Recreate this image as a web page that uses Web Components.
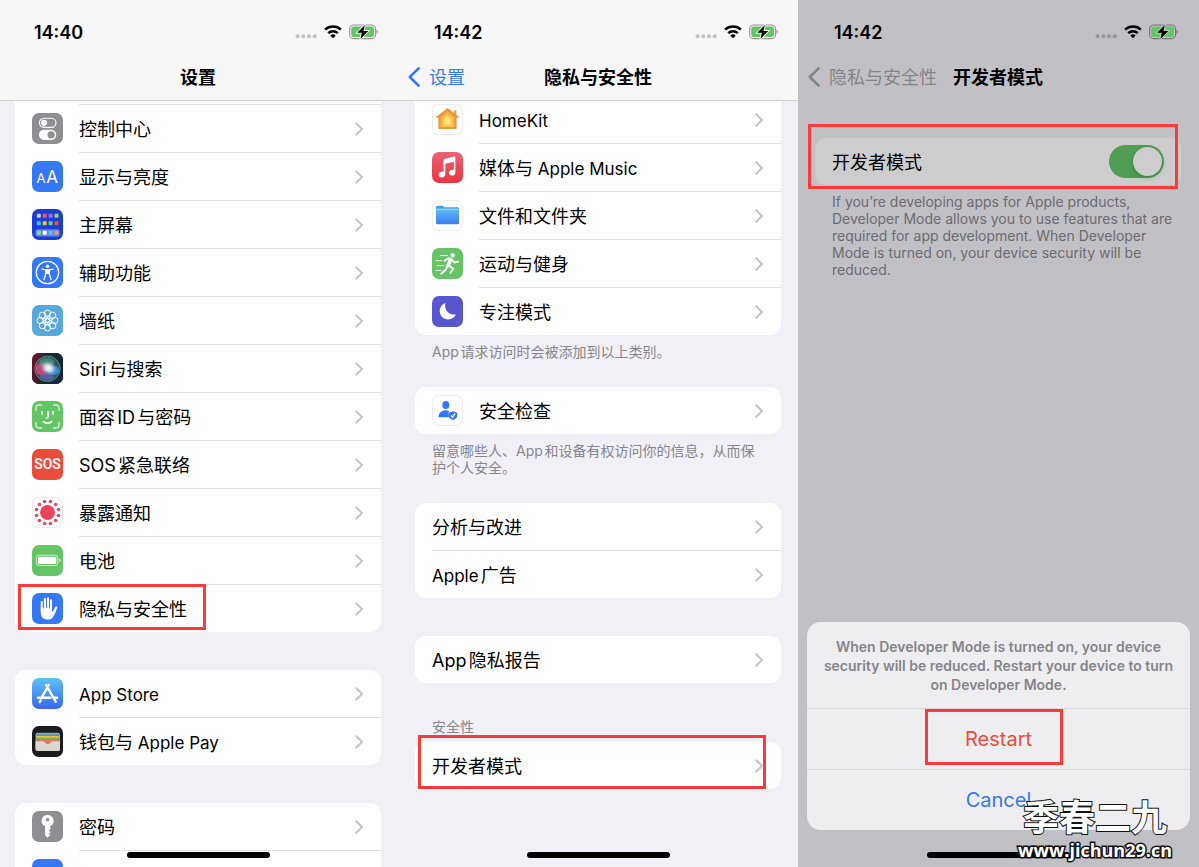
<!DOCTYPE html>
<html lang="zh-CN">
<head>
<meta charset="UTF-8">
<meta name="viewport" content="width=device-width, initial-scale=1">
<title>设置</title>
<style>
    body {
        margin: 0;
        font-family: Inter, "Noto Sans CJK SC", sans-serif;
        font-size: 17px;
        color: #000;
        overflow: hidden;
        text-autospace: normal;
    }
    .screens {
        display: grid;
        grid-template-columns: 400fr 398fr 401fr;
        height: 100vh;
        position: relative;
    }
    [lang="en"] { font-size: 17px; }
    #settings { --start: 15px; --end: 19px; }
    #privacy { --start: 15px; --end: 17px; }
    #developer { --start: 17px; --end: 18px; }
    #settings settings-group:first-of-type { --cap: 3px; --first-rule: 1px; --radius-top: 0px; }
    #privacy settings-group:first-of-type { margin-top: -5px; --radius-top: 0px; }
    #developer settings-group { margin-top: 37px; }
</style>
</head>
<body>
<main class="screens">
    <phone-screen id="settings" time="14:40" heading="设置">
        <settings-group>
            <settings-row icon="control">控制中心</settings-row>
            <settings-row icon="display">显示与亮度</settings-row>
            <settings-row icon="home">主屏幕</settings-row>
            <settings-row icon="access">辅助功能</settings-row>
            <settings-row icon="wallpaper">墙纸</settings-row>
            <settings-row icon="siri">Siri与搜索</settings-row>
            <settings-row icon="face">面容ID与密码</settings-row>
            <settings-row icon="sos">SOS紧急联络</settings-row>
            <settings-row icon="exposure">暴露通知</settings-row>
            <settings-row icon="battery">电池</settings-row>
            <settings-row icon="hand" marked style="--mark: 0 175px 2px 3px">隐私与安全性</settings-row>
        </settings-group>
        <settings-group>
            <settings-row icon="store"><span lang="en">App Store</span></settings-row>
            <settings-row icon="wallet">钱包与<span lang="en"> Apple Pay</span></settings-row>
        </settings-group>
        <settings-group>
            <settings-row icon="key">密码</settings-row>
            <settings-row icon="blank"></settings-row>
        </settings-group>
    </phone-screen>

    <phone-screen id="privacy" time="14:42" heading="隐私与安全性" back="设置">
        <settings-group note="App请求访问时会被添加到以上类别。">
            <settings-row icon="homekit"><span lang="en">HomeKit</span></settings-row>
            <settings-row icon="music">媒体与<span lang="en"> Apple Music</span></settings-row>
            <settings-row icon="folder">文件和文件夹</settings-row>
            <settings-row icon="fitness">运动与健身</settings-row>
            <settings-row icon="focus">专注模式</settings-row>
        </settings-group>
        <settings-group note="留意哪些人、App和设备有权访问你的信息，从而保护个人安全。">
            <settings-row icon="safety">安全检查</settings-row>
        </settings-group>
        <settings-group>
            <settings-row>分析与改进</settings-row>
            <settings-row><span lang="en">Apple</span>广告</settings-row>
        </settings-group>
        <settings-group>
            <settings-row>App隐私报告</settings-row>
        </settings-group>
        <settings-group caption="安全性">
            <settings-row marked style="--mark: -7px 15px 0 3px">开发者模式</settings-row>
        </settings-group>
    </phone-screen>

    <phone-screen id="developer" dimmed time="14:42" heading="开发者模式" back="隐私与安全性">
        <settings-group note="If you’re developing apps for Apple products, Developer Mode allows you to use features that are required for app development. When Developer Mode is turned on, your device security will be reduced.">
            <toggle-row>开发者模式</toggle-row>
        </settings-group>
        <action-sheet slot="overlay">
            When Developer Mode is turned on, your device security will be reduced. Restart your device to turn on Developer Mode.
        </action-sheet>
    </phone-screen>
    <site-stamp></site-stamp>
</main>

<script>
// ---- icon drawings, all on a 31 x 31 tile ----
const ring = (n, r, start, draw) =>
    Array.from({ length: n }, (_, i) => {
        const a = (start + (360 / n) * i) * Math.PI / 180;
        return draw((15.5 + r * Math.cos(a)).toFixed(2), (15.5 + r * Math.sin(a)).toFixed(2));
    }).join("");

const dots = (colors, y) =>
    colors.map((c, i) => `<rect x="${4.8 + i * 5.9}" y="${y}" width="4" height="4" rx="1" fill="${c}"/>`).join("");

const ICONS = {
    control: { bg: "#8e8e93", art: `
        <rect x="7.4" y="5.2" width="16.6" height="9.2" rx="4.6" fill="none" stroke="#fff" stroke-width="1.1"/>
        <circle cx="12.1" cy="9.8" r="3.1" fill="#fff"/>
        <rect x="6.9" y="16.7" width="17.4" height="10.2" rx="5.1" fill="#fff"/>
        <circle cx="19.1" cy="21.8" r="3.6" fill="#8e8e93"/>` },
    display: { bg: "#3478f6", art: `
        <text x="4.6" y="21.6" font-size="13" fill="#fff">A</text>
        <text x="14.3" y="21.6" font-size="17" fill="#fff">A</text>` },
    home: { bg: "#1b3fd6", art: `
        ${dots(["#cfd3da", "#ee5a68", "#a36cf0", "#a9d75a"], 4.7)}
        ${dots(["#58b7f2", "#f5b83d", "#5fd08c", "#ee5044"], 12.3)}
        <rect x="3.6" y="20.3" width="24" height="7.2" rx="2" fill="#6c83e4"/>
        ${dots(["#82e27c", "#fff", "#5cc0f5", "#f09a5b"], 21.8)}` },
    access: { bg: "#3478f6", art: `
        <circle cx="15.5" cy="15.5" r="11.2" fill="none" stroke="#fff" stroke-width="1.3"/>
        <circle cx="15.5" cy="9.3" r="1.7" fill="#fff"/>
        <path d="M9.8 12.1l4 .8v3.6l-1.9 6.2M21.2 12.1l-4 .8v3.6l1.9 6.2M13.8 13h3.4M13.9 16.5l1.6-.6 1.6.6" fill="none" stroke="#fff" stroke-width="1.3" stroke-linecap="round" stroke-linejoin="round"/>
        <path d="M13.4 12.6h4.2v4.3h-4.2z" fill="#fff"/>` },
    wallpaper: { bg: "#59a8da", art: `
        <g fill="none" stroke="#fff" stroke-width="1">
        ${ring(8, 7.2, 0, (x, y) => `<circle cx="${x}" cy="${y}" r="3.2"/>`)}
        ${ring(8, 3.3, 22, (x, y) => `<circle cx="${x}" cy="${y}" r="1.6"/>`)}
        <circle cx="15.5" cy="15.5" r="2"/></g>` },
    siri: { bg: "#191a2c", art: `
        <defs>
            <linearGradient id="tile" x1="0" x2="1" y1=".4" y2=".6"><stop offset="0" stop-color="#6a1230"/><stop offset=".45" stop-color="#1d2a2c"/><stop offset="1" stop-color="#12243f"/></linearGradient>
            <radialGradient id="core"><stop offset="0" stop-color="#fff"/><stop offset=".4" stop-color="#e6eefa" stop-opacity=".85"/><stop offset="1" stop-color="#a8c6ee" stop-opacity="0"/></radialGradient>
        </defs>
        <rect width="31" height="31" fill="url(#tile)"/>
        <circle cx="15.5" cy="15.8" r="12.7" fill="#3d6f70" fill-opacity=".65" stroke="#5b9da0" stroke-width=".8"/>
        <ellipse cx="9.6" cy="16" rx="5.8" ry="6.2" fill="#d9487a" fill-opacity=".8"/>
        <ellipse cx="15" cy="9.500" rx="7.500" ry="4.500" fill="#4aa982" fill-opacity=".6"/>
        <ellipse cx="21.5" cy="17.5" rx="6" ry="4.6" fill="#3796e0" fill-opacity=".85"/>
        <ellipse cx="15" cy="23.5" rx="7" ry="3.6" fill="#6a62c4" fill-opacity=".65"/>
        <ellipse cx="16.5" cy="15" rx="8.500" ry="7" transform="rotate(28 16.5 15)" fill="url(#core)"/>` },
    face: { bg: "#65c466", art: `
        <g fill="none" stroke="#fff" stroke-linecap="round">
        <path d="M4 9.6V7.2Q4 4 7.2 4h2.4M21.4 4h2.4Q27 4 27 7.2v2.4M27 21.4v2.4q0 3.2-3.2 3.2h-2.4M9.6 27H7.2Q4 27 4 23.800v-2.4" stroke-width="1.3" opacity=".75"/>
        <path d="M10 10.500v2.400M21 10.500v2.400M16 10.500v5.300q0 1.200-1.500 1.200M11.300 20.600q4.200 3.300 8.400 0" stroke-width="1.7"/></g>` },
    sos: { bg: "#eb4d3d", art: `
        <text x="15.5" y="20.4" font-size="14" font-weight="600" font-family="Roboto" text-anchor="middle" fill="#fff">SOS</text>` },
    exposure: { bg: "#fff", art: `
        <circle cx="15.5" cy="15.5" r="7.4" fill="#eb445a"/>
        <g fill="#ea4865">${ring(12, 11.4, 15, (x, y) => `<circle cx="${x}" cy="${y}" r="1.8"/>`)}</g>` },
    battery: { bg: "#65c466", art: `
        <rect x="4.500" y="10.200" width="21.300" height="10.400" rx="2.600" fill="none" stroke="#fff" stroke-opacity=".7"/>
        <rect x="6" y="11.700" width="18.300" height="7.400" rx="1.300" fill="#fff"/>
        <path d="M27.300 13.500q1.400.7 1.400 1.900t-1.400 1.900z" fill="#fff" opacity=".75"/>` },
    hand: { bg: "#3478f6", art: `
        <g stroke="#fff" stroke-width="2.100" stroke-linecap="round">
        <path d="M9.800 9v9M12.900 6v11M16 5.300v11M19 7.200v11M24.200 14.400l-2.800 5.300"/></g>
        <path d="M8.750 14.500h11.300v3.400l1.500 1.200 1.700-3 1.200.5c-1.200 3.500-2.300 6-3.700 7.800-1.300 1.600-3.100 2.100-5.300 2.100-4.100 0-6.700-2.600-6.700-7z" fill="#fff"/>
        <path d="M11.350 9v6.500M14.450 7v8M17.500 8v7.500" stroke="#3478f6" stroke-width=".8"/>` },
    store: { bg: "linear-gradient(#5ec3f7, #3567ed)", art: `
        <g stroke="#fff" stroke-width="2.400" stroke-linecap="round" fill="none">
        <path d="M16.800 7L10 18.800M14.100 7l9.600 16.700M6 19.700h12.200M22.400 19.700h2.700M8.800 22.200l-1.200 1.900"/></g>` },
    wallet: { bg: "#1c1c1e", art: `
        <rect x="3.500" y="6.800" width="24.500" height="18.200" rx="2" fill="#9ba4a7"/>
        <path d="M4.500 8.300h22.500v2H4.500z" fill="#3e9bd0"/><path d="M4.500 10h22.500v2H4.500z" fill="#eebd3f"/>
        <path d="M4.500 11.700h22.500v2H4.500z" fill="#64b559"/><path d="M4.500 13.400h22.500v6H4.500z" fill="#e9715f"/>
        <path d="M3.500 15.300h7.600c1.800 0 1.900 2.800 4.600 2.800s2.800-2.800 4.600-2.800H28V23q0 2-2 2H5.500q-2 0-2-2z" fill="#dad8cf"/>` },
    key: { bg: "#8e8e93", art: `
        <path d="M15.600 4a5.900 5.900 0 0 0-2.500 11.300v8.900l2.600 2.500 2.500-2.500-1.200-1.500 1.700-1.700-1.700-1.600 1.700-1.800-.6-2.300A5.900 5.900 0 0 0 15.600 4z" fill="#fff"/>
        <circle cx="15.600" cy="8.700" r="1.800" fill="#8e8e93"/>` },
    blank: { bg: "#3478f6", art: "" },
    homekit: { bg: "#fff", art: `
        <path d="M15.500 4L4.300 12.700q-.6 1.100.6 1.100h1.500V24q0 1 1 1h16.200q1 0 1-1V13.800h1.500q1.200 0 .6-1.100l-2.400-1.900V6.500h-2.200v2.600z" fill="#ec963d"/>
        <path d="M15.500 7.600l-7 5.700v9.800h14v-9.800z" fill="#f4b44a"/>
        <path d="M15.500 9.900l-5 4.200v9h10v-9z" fill="#f8c853"/>
        <path d="M15.500 12.500l-3 2.600v5.500h6v-5.500z" fill="#fbe47b"/>` },
    music: { bg: "linear-gradient(#ed6279, #e5373f)", art: `
        <path d="M11.500 8.200q0-1 1-1.300l9.500-2.300q1.400-.3 1.400 1.100v14.200c0 2.400-1.400 3.600-3.500 3.600-1.900 0-3.100-1.100-3.100-2.700 0-2.500 2.500-2.600 4.300-3.100.6-.2.800-.5.800-1.100V9.800l-8.500 2v10c0 2.300-1.400 3.700-3.600 3.700-1.900 0-3.100-1.200-3.100-2.800 0-2.300 2.200-2.700 4-3.100.6-.2.800-.5.800-1.100z" fill="#fff"/>` },
    folder: { bg: "#fff", art: `
        <defs><linearGradient id="fold" x2="0" y2="1"><stop stop-color="#5bbcf6"/><stop offset="1" stop-color="#3b7ded"/></linearGradient></defs>
        <path d="M4 7.500q0-1.700 1.500-1.700h5.200l1.600 1.400h13.200q1.500 0 1.500 1.500v3H4z" fill="#429fdc"/>
        <path d="M4.500 8.700h22v1.500h-22z" fill="#d9effb"/>
        <path d="M4 9.400h23v13.300q0 1.500-1.500 1.500h-20Q4 24.200 4 22.700z" fill="url(#fold)"/>` },
    fitness: { bg: "#65c466", art: `
        <circle cx="20.600" cy="7.200" r="2.200" fill="#fff"/>
        <path d="M12.500 12.600l3.800-2.300 3.200.8-2.900 6.200" fill="none" stroke="#fff" stroke-width="2" stroke-linecap="round" stroke-linejoin="round"/>
        <path d="M18.600 11.600l-2.500 5.700" stroke="#fff" stroke-width="3.600" stroke-linecap="round"/>
        <path d="M19.700 11.500l2.500 3 4-1M16.800 17.600l4.400 3.100-2.600 4M15.200 18.400L13.500 22l-4.300 3.700" fill="none" stroke="#fff" stroke-width="1.900" stroke-linecap="round" stroke-linejoin="round"/>
        <path d="M8.700 7.600h7M3.800 12.600h5.700M5 17.600h7M4 22.400h5" stroke="#fff" stroke-width=".9" stroke-linecap="round"/>` },
    focus: { bg: "#5856ce", art: `
        <path d="M13.400 7.100a9 9 0 0 0 10.400 11.300A8.400 8.400 0 1 1 13.400 7.100z" fill="#fff"/>` },
    safety: { bg: "#fff", art: `
        <ellipse cx="13.800" cy="10" rx="3.500" ry="3.900" fill="#3478f6"/>
        <path d="M6.500 22.300c0-4.300 3-7 7.300-7 1.200 0 2.300.2 3.200.6-.7 2.300-.6 4.500.4 6.400z" fill="#3478f6"/>
        <path d="M20.900 16.300l4.300 1.500v2.700c0 2.200-1.800 3.700-4.300 4.600-2.500-.9-4.300-2.400-4.300-4.600v-2.700z" fill="#3478f6"/>
        <path d="M18.900 20.500l1.500 1.700 2.700-3.600" fill="none" stroke="#fff" stroke-width="1.200"/>` }
};

class AppIcon extends HTMLElement {
    constructor() {
        super();
        this.attachShadow({ mode: "open" });
    }

    connectedCallback() {
        const { bg, art } = ICONS[this.getAttribute("name")];
        this.shadowRoot.innerHTML = `
        <style>
            :host {
                display: block;
                flex: none;
                width: 31px;
                height: 31px;
                border-radius: 7px;
                overflow: hidden;
                background: ${bg};
                ${bg === "#fff" ? "box-shadow: inset 0 0 0 1px #ededf0;" : ""}
            }
            svg { display: block; }
        </style>
        <svg viewBox="0 0 31 31" width="31" height="31" aria-hidden="true">${art}</svg>`;
    }
}
customElements.define("app-icon", AppIcon);

class StatusBar extends HTMLElement {
    constructor() {
        super();
        this.attachShadow({ mode: "open" });
    }

    connectedCallback() {
        this.shadowRoot.innerHTML = `
        <style>
            :host {
                display: flex;
                justify-content: space-between;
                align-items: center;
                height: 44px;
                padding: 10px 3px 0 19px;
                font-size: 18px;
                font-weight: 600;
            }
            .signals { display: flex; align-items: center; gap: 7px; }
            svg { display: block; }
        </style>
        <span>${this.getAttribute("time")}</span>
        <div class="signals">
            <svg width="22" height="16" viewBox="0 0 22 16" fill="currentColor" opacity=".22">
                <circle cx="2.600" cy="12.300" r="2"/><circle cx="8.300" cy="12.300" r="2"/><circle cx="14" cy="12.300" r="2"/><circle cx="19.700" cy="12.300" r="2"/>
            </svg>
            <svg width="18" height="16" viewBox="0 0 18 16" fill="none" stroke="currentColor" stroke-width="2.500">
                <path d="M1.100 5.700a11.500 11.500 0 0 1 15.800 0M4.200 9.200a7 7 0 0 1 9.600 0"/>
                <path d="M9 14.300l-2.700-2.800a3.900 3.900 0 0 1 5.400 0z" fill="currentColor" stroke="none"/>
            </svg>
            <svg width="29" height="16" viewBox="0 0 29 16">
                <rect x=".6" y="1" width="26" height="13.600" rx="4.200" fill="none" stroke="#000" stroke-opacity=".4" stroke-width="1.100"/>
                <rect x="2.200" y="2.600" width="22.800" height="10.400" rx="2.700" fill="#65c466"/>
                <path d="M27.700 5.700q1.200.6 1.200 2.100t-1.200 2.100z" fill="#000" opacity=".45"/>
                <path d="M15.800.9L8.200 8.800h4.600l-1.300 6.100 7.800-8h-4.800z" fill="#000" stroke="var(--bar, #f7f7f7)" stroke-width="1.800" paint-order="stroke"/>
            </svg>
        </div>`;
    }
}
customElements.define("status-bar", StatusBar);

class PhoneScreen extends HTMLElement {
    constructor() {
        super();
        this.attachShadow({ mode: "open" });
    }

    connectedCallback() {
        const back = this.getAttribute("back");
        this.shadowRoot.innerHTML = `
        <style>
            :host {
                display: flex;
                flex-direction: column;
                position: relative;
                min-width: 0;
                min-height: 0;
                overflow: hidden;
                background: #f1f0f6;
                --bar: #f7f7f8;
            }
            :host([dimmed]) {
                background: #c1c0c5;
                --bar: #c1c0c5;
                --line: #c1c0c5;
                --card: #cdcdcd;
                --muted: #6c6c71;
                --tint: #858589;
            }
            header {
                flex: none;
                padding: 0 var(--end) 0 var(--start);
                background: var(--bar);
                border-bottom: 1px solid var(--line, #d0d0d3);
            }
            nav {
                display: grid;
                grid-template-columns: 1fr auto 1fr;
                align-items: center;
                height: 46px;
            }
            h1 { grid-column: 2; margin: 0; padding-top: 2px; font-size: 18px; font-weight: 600; line-height: 24px; }
            a {
                display: flex;
                align-items: center;
                gap: 9px;
                margin-left: -7px;
                font-size: 18px;
                line-height: 24px;
                white-space: nowrap;
                color: var(--tint, #3478f6);
                text-decoration: none;
            }
            a span { padding-top: 2px; }
            .content {
                flex: 1;
                min-height: 0;
                overflow: hidden;
                padding: 0 var(--end) 0 var(--start);
            }
            .overlay {
                position: absolute;
                inset: auto 9px 37px;
            }
            .home {
                position: absolute;
                inset: auto var(--end) 9px var(--start);
                display: flex;
                justify-content: center;
            }
            .home::before {
                content: "";
                width: 143px;
                height: 6px;
                border-radius: 3px;
                background: #000;
            }
        </style>
        <header>
            <status-bar time="${this.getAttribute("time")}"></status-bar>
            <nav>
                ${back ? `<a href="#"><svg width="12" height="20" viewBox="0 0 12 20" fill="none" stroke="currentColor" stroke-width="2.600" stroke-linecap="round" stroke-linejoin="round"><path d="M10.600 1.400L1.800 10l8.800 8.600"/></svg><span>${back}</span></a>` : ""}
                <h1>${this.getAttribute("heading")}</h1>
            </nav>
        </header>
        <div class="content"><slot></slot></div>
        <div class="overlay"><slot name="overlay"></slot></div>
        <div class="home"></div>`;
    }
}
customElements.define("phone-screen", PhoneScreen);

class SettingsGroup extends HTMLElement {
    constructor() {
        super();
        this.attachShadow({ mode: "open" });
    }

    connectedCallback() {
        const caption = this.getAttribute("caption");
        const note = this.getAttribute("note");
        this.shadowRoot.innerHTML = `
        <style>
            :host { display: block; margin-bottom: 38px; }
            :host([note]) { margin-bottom: 27px; }
            :host([caption]) { margin-top: -3px; }
            .card {
                padding-top: var(--cap, 0);
                background: var(--card, #fff);
                border-radius: var(--radius-top, 11px) var(--radius-top, 11px) 11px 11px;
            }
            ::slotted(:first-child) { --rule: var(--first-rule, 0px); }
            h2, p {
                margin: 0;
                padding: 0 8px 0 17px;
                font-size: 14px;
                font-weight: 400;
                line-height: 17px;
                color: var(--muted, #86868b);
            }
            h2 { padding-bottom: 7px; }
            p { padding-top: 8px; }
            p:lang(zh) { padding-right: 17px; }
        </style>
        ${caption ? `<h2>${caption}</h2>` : ""}
        <div class="card"><slot></slot></div>
        ${note ? `<p lang="${/^If/.test(note) ? "en" : "zh"}">${note}</p>` : ""}`;
    }
}
customElements.define("settings-group", SettingsGroup);

const rowStyles = `
    :host { display: block; position: relative; }
    .label {
        flex: 1;
        display: flex;
        align-items: center;
        justify-content: space-between;
        min-height: 47px;
        border-top: var(--rule, 1px) solid #e2e2e5;
        padding-right: 18px;
        font-size: 18px;
        line-height: 24px;
    }
    .label span { padding-top: 2px; }
    .mark {
        position: absolute;
        inset: var(--mark);
        border: 3px solid #fb3b3b;
        pointer-events: none;
    }
`;

class SettingsRow extends HTMLElement {
    constructor() {
        super();
        this.attachShadow({ mode: "open" });
    }

    connectedCallback() {
        const icon = this.getAttribute("icon");
        this.shadowRoot.innerHTML = `
        <style>
            ${rowStyles}
            a {
                display: flex;
                align-items: center;
                gap: 16px;
                padding-left: 17px;
                color: inherit;
                text-decoration: none;
            }
        </style>
        <a href="#">
            ${icon ? `<app-icon name="${icon}"></app-icon>` : ""}
            <div class="label">
                <span><slot></slot></span>
                <svg width="8" height="14" viewBox="0 0 8 14" fill="none" stroke="#c4c4c7" stroke-width="2" stroke-linecap="round" stroke-linejoin="round"><path d="M1.200 1.200L7 7l-5.800 5.800"/></svg>
            </div>
        </a>
        ${this.hasAttribute("marked") ? `<div class="mark"></div>` : ""}`;
    }
}
customElements.define("settings-row", SettingsRow);

class ToggleRow extends HTMLElement {
    constructor() {
        super();
        this.attachShadow({ mode: "open" });
    }

    connectedCallback() {
        this.shadowRoot.innerHTML = `
        <style>
            ${rowStyles}
            :host { --mark: -14px 3px -4px -7px; }
            .label { padding: 0 17px; }
            input {
                appearance: none;
                flex: none;
                width: 55px;
                height: 33px;
                margin: 0;
                padding: 2px;
                box-sizing: border-box;
                border-radius: 17px;
                background: #8f8f93;
            }
            input::before {
                content: "";
                display: block;
                width: 29px;
                height: 29px;
                border-radius: 50%;
                background: #cdcdcd;
                box-shadow: 0 2px 5px rgba(0, 0, 0, .2);
            }
            input:checked { background: #509e53; }
            input:checked::before { margin-left: auto; }
        </style>
        <label class="label"><span><slot></slot></span><input type="checkbox" role="switch" checked></label>
        <div class="mark"></div>`;
    }
}
customElements.define("toggle-row", ToggleRow);

class ActionSheet extends HTMLElement {
    constructor() {
        super();
        this.attachShadow({ mode: "open" });
    }

    connectedCallback() {
        this.shadowRoot.innerHTML = `
        <style>
            :host {
                display: block;
                border-radius: 14px;
                background: #eeeef0;
            }
            p {
                margin: 0;
                padding: 15px 16px 14px;
                text-align: center;
                font-size: 14px;
                font-weight: 600;
                line-height: 19px;
                color: #86868a;
            }
            button {
                display: block;
                position: relative;
                width: 100%;
                height: 61px;
                padding: 0;
                border: 0;
                border-top: 1px solid #d9d9dc;
                background: none;
                font: inherit;
                font-size: 20px;
                color: #3478f6;
            }
            .destructive { color: #eb4d3d; }
            .mark {
                position: absolute;
                inset: 0 127px 4px 118px;
                border: 3px solid #fb3b3b;
            }
        </style>
        <p><slot></slot></p>
        <button type="button" class="destructive">Restart<span class="mark"></span></button>
        <button type="button">Cancel</button>`;
    }
}
customElements.define("action-sheet", ActionSheet);

class SiteStamp extends HTMLElement {
    constructor() {
        super();
        this.attachShadow({ mode: "open" });
        this.shadowRoot.innerHTML = `
        <style>
            :host {
                position: absolute;
                right: 27px;
                bottom: 5px;
                text-align: center;
                color: #fff;
                -webkit-text-stroke: 3px #111;
                paint-order: stroke fill;
                pointer-events: none;
            }
            div { font-size: 36px; line-height: 40px; font-weight: 700; -webkit-text-stroke-width: 2px; }
            span { display: block; font: 700 18px/24px "Open Sans", sans-serif; }
        </style>
        <div>季春二九</div>
        <span>www.jichun29.cn</span>`;
    }
}
customElements.define("site-stamp", SiteStamp);
</script>
</body>
</html>
